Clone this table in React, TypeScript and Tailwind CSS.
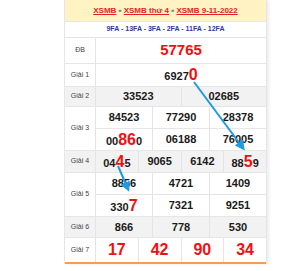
import React from "react";

type Part = { t: string; red?: boolean };

const font = { fontFamily: '"Liberation Sans", Arial, sans-serif' };

function Num({ parts }: { parts: Part[] }) {
  return (
    <span className="text-[11px] font-bold text-[#1a1a1a] leading-none">
      {parts.map((p, i) =>
        p.red ? (
          <span key={i} className="text-[16px] text-[#f01010]">
            {p.t}
          </span>
        ) : (
          <span key={i}>{p.t}</span>
        )
      )}
    </span>
  );
}

function Cells({ items, h, grey }: { items: Part[][]; h: string; grey?: boolean }) {
  return (
    <div className={`flex ${h} ${grey ? "bg-[#f2f2f2]" : ""}`}>
      {items.map((parts, i) => (
        <div
          key={i}
          className={`flex-1 flex items-center justify-center ${i > 0 ? "border-l border-[#e4e4e4]" : ""}`}
        >
          <Num parts={parts} />
        </div>
      ))}
    </div>
  );
}

function Label({ text }: { text: string }) {
  return (
    <div className="w-[31px] shrink-0 flex items-center justify-center border-r border-[#e4e4e4] text-[7px] text-[#444]">
      {text}
    </div>
  );
}

const n = (s: string): Part[] => [{ t: s }];

export default function App() {
  return (
    <div className="relative w-[300px] h-[271px] bg-white" style={font}>
      <div className="ml-[64px] w-[203px] border-x border-[#e6e6e6] shadow-[2px_0_3px_rgba(0,0,0,0.08)]">
        <div className="h-[22px] bg-[#fff3c4] border-b border-[#e6e6e6] flex items-center justify-center text-[8px] font-bold">
          <span className="text-[#e3231b] underline">XSMB</span>
          <span className="mx-[2px] text-[6px] text-[#555]">»</span>
          <span className="text-[#e3231b] underline">XSMB thứ 4</span>
          <span className="mx-[2px] text-[6px] text-[#555]">»</span>
          <span className="text-[#e3231b] underline">XSMB 9-11-2022</span>
        </div>
        <div className="h-[16px] border-b border-[#e6e6e6] flex items-center justify-center text-[7px] font-bold text-[#2b3a9f]">
          9FA - 13FA - 3FA - 2FA - 11FA - 12FA
        </div>

        <div className="flex h-[26px] border-b border-[#e6e6e6]">
          <Label text="ĐB" />
          <div className="flex-1 flex items-center justify-center text-[15px] font-bold text-[#f01010]">57765</div>
        </div>

        <div className="flex h-[23px] border-b border-[#e6e6e6]">
          <Label text="Giải 1" />
          <div className="flex-1">
            <Cells h="h-full" items={[[{ t: "6927" }, { t: "0", red: true }]]} />
          </div>
        </div>

        <div className="flex h-[20px] border-b border-[#e6e6e6] bg-[#f2f2f2]">
          <Label text="Giải 2" />
          <div className="flex-1">
            <Cells h="h-full" items={[n("33523"), n("02685")]} />
          </div>
        </div>

        <div className="flex border-b border-[#e6e6e6]">
          <Label text="Giải 3" />
          <div className="flex-1">
            <div className="border-b border-[#e6e6e6]">
              <Cells h="h-[21px]" items={[n("84523"), n("77290"), n("28378")]} />
            </div>
            <Cells
              h="h-[21px]"
              items={[[{ t: "00" }, { t: "86", red: true }, { t: "0" }], n("06188"), n("76005")]}
            />
          </div>
        </div>

        <div className="flex h-[22px] border-b border-[#e6e6e6] bg-[#f2f2f2]">
          <Label text="Giải 4" />
          <div className="flex-1">
            <Cells
              h="h-full"
              items={[
                [{ t: "04" }, { t: "4", red: true }, { t: "5" }],
                n("9065"),
                n("6142"),
                [{ t: "88" }, { t: "5", red: true }, { t: "9" }],
              ]}
            />
          </div>
        </div>

        <div className="flex border-b border-[#e6e6e6]">
          <Label text="Giải 5" />
          <div className="flex-1">
            <div className="border-b border-[#e6e6e6]">
              <Cells h="h-[21px]" items={[n("8856"), n("4721"), n("1409")]} />
            </div>
            <Cells h="h-[21px]" items={[[{ t: "330" }, { t: "7", red: true }], n("7321"), n("9251")]} />
          </div>
        </div>

        <div className="flex h-[21px] border-b border-[#e6e6e6] bg-[#f2f2f2]">
          <Label text="Giải 6" />
          <div className="flex-1">
            <Cells h="h-full" items={[n("866"), n("778"), n("530")]} />
          </div>
        </div>

        <div className="flex h-[26px] border-b-2 border-b-[#f0a050]">
          <Label text="Giải 7" />
          <div className="flex-1 flex text-[16px] font-bold text-[#f01010]">
            {["17", "42", "90", "34"].map((v, i) => (
              <div
                key={v}
                className={`flex-1 flex items-center justify-center ${i > 0 ? "border-l border-[#e4e4e4]" : ""}`}
              >
                {v}
              </div>
            ))}
          </div>
        </div>
      </div>

      <svg className="absolute left-0 top-0 pointer-events-none" width="300" height="271">
        <defs>
          <marker id="ah" markerWidth="5" markerHeight="5" refX="3.5" refY="2.5" orient="auto">
            <path d="M0,0 L5,2.5 L0,5 Z" fill="#1d9ae0" />
          </marker>
        </defs>
        <line x1="194" y1="82" x2="243" y2="148" stroke="#1d9ae0" strokeWidth="2" markerEnd="url(#ah)" />
        <line x1="118" y1="166" x2="128" y2="189" stroke="#1d9ae0" strokeWidth="2" markerEnd="url(#ah)" />
      </svg>
    </div>
  );
}
